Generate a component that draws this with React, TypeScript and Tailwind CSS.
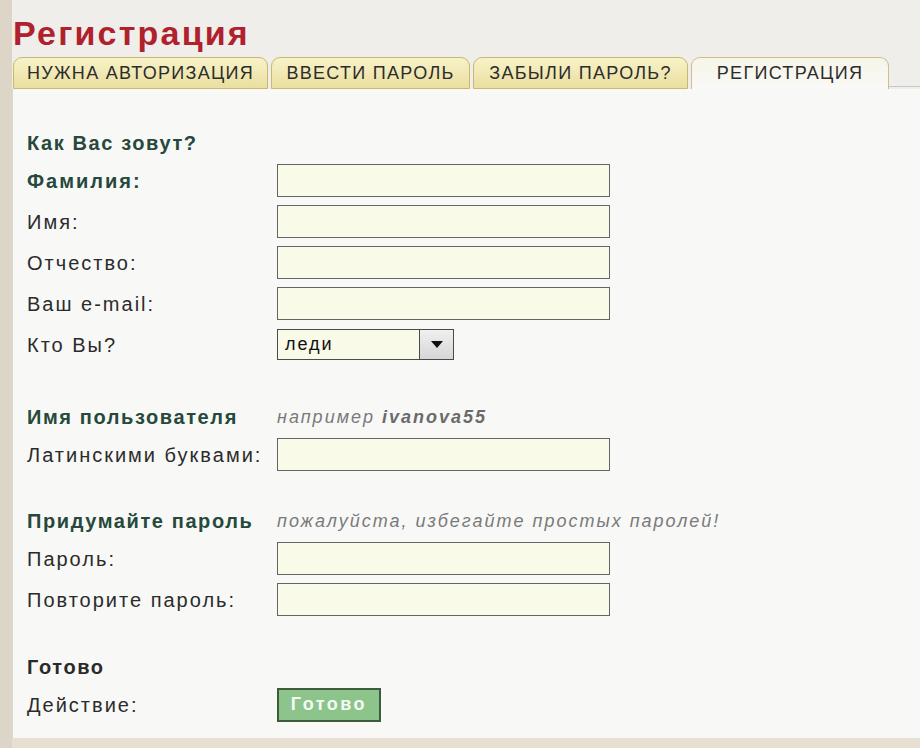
const font = { fontFamily: '"Liberation Sans", Arial, sans-serif' };

function Field() {
  return <div className="w-[333px] h-[33px] border border-[#646464] bg-[#fafae8]" />;
}

function Row({ label, bold, children }: { label: string; bold?: boolean; children?: React.ReactNode }) {
  return (
    <div className="flex items-center h-[41px]">
      <div
        className={`w-[250px] text-[20px] tracking-[2px] whitespace-nowrap ${
          bold ? "font-bold tracking-[1.6px] text-[#26493c]" : "text-[#2b2b2b]"
        }`}
      >
        {label}
      </div>
      {children}
    </div>
  );
}

function Heading({ text, hint, sample }: { text: string; hint?: string; sample?: string }) {
  return (
    <div className="flex items-center h-[34px]">
      <div className="w-[250px] text-[20px] tracking-[1.6px] font-bold text-[#26493c] whitespace-nowrap">{text}</div>
      {hint && (
        <div className="text-[18px] italic tracking-[2px] text-[#7a7a7a] whitespace-nowrap">
          {hint}
          {sample && <span className="font-bold text-[#6a6a6a]"> {sample}</span>}
        </div>
      )}
    </div>
  );
}

const tabs = [
  { label: "НУЖНА АВТОРИЗАЦИЯ", w: "w-[255px]" },
  { label: "ВВЕСТИ ПАРОЛЬ", w: "w-[199px]" },
  { label: "ЗАБЫЛИ ПАРОЛЬ?", w: "w-[215px]" },
];

export default function App() {
  return (
    <div style={font} className="w-[920px] h-[748px] bg-[#efeeeb] flex overflow-hidden">
      <div className="w-[12px] bg-[#ddd5c8]" />
      <div className="flex-1 flex flex-col">
        <div className="pt-[13px] h-[57px] pl-px">
          <h1 className="text-[34px] leading-[40px] font-bold text-[#b0212e] tracking-[2.2px]">Регистрация</h1>
        </div>
        <div className="flex items-end h-[32px] pl-px">
          {tabs.map((t) => (
            <div
              key={t.label}
              className={`${t.w} h-[32px] mr-[3px] rounded-t-[9px] border border-[#c9b873] bg-gradient-to-b from-[#f8f2c8] to-[#eadf9f] flex items-center justify-center text-[18px] tracking-[1.3px] text-[#2c2c2c] whitespace-nowrap`}
            >
              {t.label}
            </div>
          ))}
          <div className="w-[198px] h-[32px] rounded-t-[9px] border border-b-0 border-[#cdbf86] bg-gradient-to-b from-[#f7f5e8] to-[#f9f9f7] flex items-center justify-center text-[18px] tracking-[1.3px] text-[#2c2c2c]">
            РЕГИСТРАЦИЯ
          </div>
          <div className="flex-1 border-b border-[#c8c8c8] mb-[2px]" />
        </div>
        <div className="flex-1 bg-[#f8f8f7] border-l border-[#d8d8d4] pl-[14px] pt-[37px]">
          <Heading text="Как Вас зовут?" />
          <Row label="Фамилия:" bold>
            <Field />
          </Row>
          <Row label="Имя:">
            <Field />
          </Row>
          <Row label="Отчество:">
            <Field />
          </Row>
          <Row label="Ваш e-mail:">
            <Field />
          </Row>
          <Row label="Кто Вы?">
            <div className="w-[177px] h-[31px] border border-[#4a4a4a] bg-[#fafae8] flex">
              <div className="flex-1 flex items-center pl-[7px] text-[18px] tracking-[2px] text-[#111]">леди</div>
              <div className="w-[34px] border-l border-[#4a4a4a] bg-gradient-to-b from-[#f0f0f0] to-[#d6d6d6] flex items-center justify-center">
                <svg width="12" height="7" viewBox="0 0 12 7">
                  <path d="M0 0h12L6 7z" fill="#111" />
                </svg>
              </div>
            </div>
          </Row>
          <div className="h-[35px]" />
          <Heading text="Имя пользователя" hint="например" sample="ivanova55" />
          <Row label="Латинскими буквами:">
            <Field />
          </Row>
          <div className="h-[29px]" />
          <Heading text="Придумайте пароль" hint="пожалуйста, избегайте простых паролей!" />
          <Row label="Пароль:">
            <Field />
          </Row>
          <Row label="Повторите пароль:">
            <Field />
          </Row>
          <div className="h-[30px]" />
          <div className="flex items-center h-[34px] text-[20px] tracking-[1.6px] font-bold text-[#2a2a2a]">Готово</div>
          <Row label="Действие:">
            <button className="w-[104px] h-[34px] border-2 border-[#3c5c3c] bg-[#8cc48c] text-[#f4fbf4] font-bold text-[18px] tracking-[2.5px]">
              Готово
            </button>
          </Row>
        </div>
        <div className="h-[10px] bg-[#e6dfd2]" />
      </div>
    </div>
  );
}
